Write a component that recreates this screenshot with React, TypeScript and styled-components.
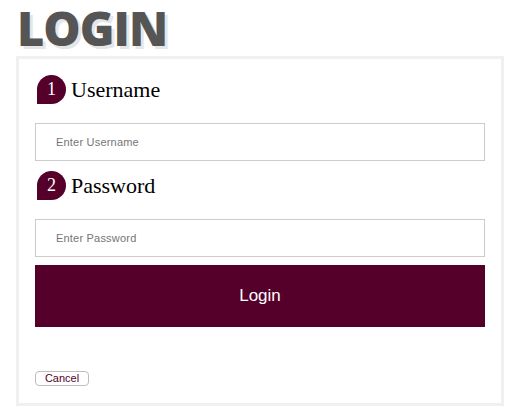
import React from "react";
import styled, { createGlobalStyle } from "styled-components";

const Global = createGlobalStyle`
  html, body { margin: 0; padding: 0; background: #fff; }
  body { font-family: "Liberation Sans", Arial, sans-serif; }
`;

const Page = styled.div`
  width: 522px;
  height: 415px;
  padding: 0 18px 0 16px;
  box-sizing: border-box;
`;

const Title = styled.h1`
  margin: 0 0 0 1px;
  font-family: "Open Sans", sans-serif;
  font-weight: 800;
  font-size: 47px;
  line-height: 56px;
  letter-spacing: -1px;
  color: #555;
  text-shadow: 3px 3px 0 #e6e6e6;
  white-space: nowrap;
`;

const Panel = styled.form`
  width: 488px;
  height: 350px;
  box-sizing: border-box;
  border: 3px solid #f0f0f0;
  padding: 16px 16px 0 16px;
  display: flex;
  flex-direction: column;
`;

const Field = styled.div<{ $gap: number }>`
  display: flex;
  flex-direction: column;
  margin-bottom: ${(p) => p.$gap}px;
`;

const LabelRow = styled.label`
  display: flex;
  align-items: center;
  gap: 5px;
  margin: 0 0 19px 2px;
  height: 29px;
`;

const Badge = styled.span`
  width: 29px;
  height: 29px;
  border-radius: 15px 15px 15px 0;
  background: #55002a;
  color: #fff;
  font-family: "Liberation Serif", serif;
  font-size: 18px;
  display: flex;
  align-items: center;
  justify-content: center;
`;

const LabelText = styled.span`
  font-family: "Liberation Serif", serif;
  font-size: 22px;
  color: #000;
`;

const Input = styled.input`
  height: 38px;
  box-sizing: border-box;
  border: 1px solid #ccc;
  padding: 0 0 0 20px;
  font-family: "Liberation Sans", Arial, sans-serif;
  font-size: 11px;
  letter-spacing: 0.2px;
  color: #333;
  outline: none;
  &::placeholder { color: #757575; }
`;

const Submit = styled.button`
  height: 62px;
  border: none;
  background: #55002a;
  color: #fff;
  font-family: "Liberation Sans", Arial, sans-serif;
  font-size: 17px;
  cursor: pointer;
  margin-bottom: 44px;
`;

const Cancel = styled.button`
  align-self: flex-start;
  height: 15px;
  width: 54px;
  box-sizing: border-box;
  padding: 0;
  border: 1px solid #bdbdbd;
  border-radius: 4px;
  background: #fff;
  color: #55002a;
  font-family: "Liberation Sans", Arial, sans-serif;
  font-size: 11px;
  line-height: 13px;
`;

export default function App() {
  return (
    <>
      <Global />
      <Page>
        <Title>LOGIN</Title>
        <Panel onSubmit={(e) => e.preventDefault()}>
          <Field $gap={10}>
            <LabelRow>
              <Badge>1</Badge>
              <LabelText>Username</LabelText>
            </LabelRow>
            <Input placeholder="Enter Username" />
          </Field>
          <Field $gap={8}>
            <LabelRow>
              <Badge>2</Badge>
              <LabelText>Password</LabelText>
            </LabelRow>
            <Input type="password" placeholder="Enter Password" />
          </Field>
          <Submit type="submit">Login</Submit>
          <Cancel type="button">Cancel</Cancel>
        </Panel>
      </Page>
    </>
  );
}
